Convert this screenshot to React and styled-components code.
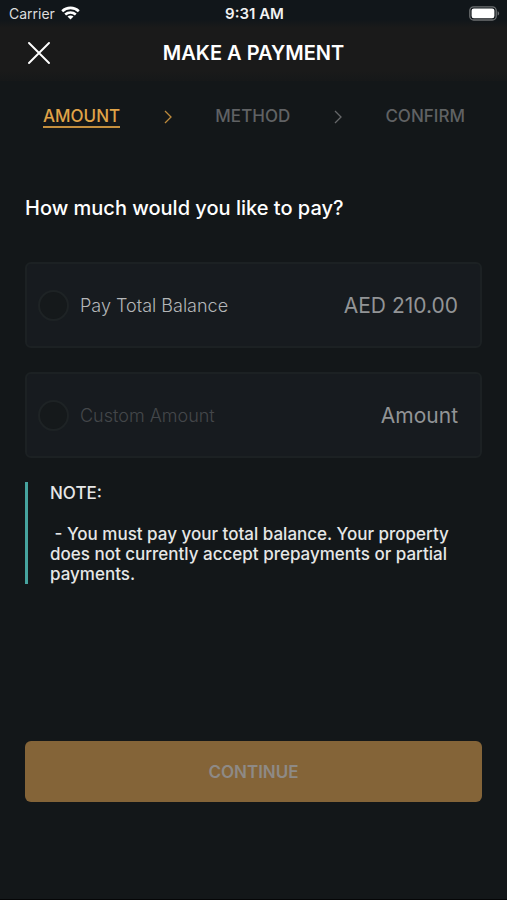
import * as React from "react";
import styled, { createGlobalStyle } from "styled-components";

const steps = ["Amount", "Method", "Confirm"];

function WifiIcon() {
  return (
    <svg width="19" height="14" viewBox="0 0 19 14" aria-hidden="true">
      <g fill="none" stroke="#fff" strokeWidth="2.6">
        <path d="M1.2 5.2C5.8 0.8 13.2 0.8 17.8 5.2" />
        <path d="M4.2 8.6C7.3 5.9 11.7 5.9 14.8 8.6" />
      </g>
      <path d="M6.5 10.6C8.3 9.2 10.7 9.2 12.5 10.6L9.5 13.6Z" fill="#fff" />
    </svg>
  );
}

function BatteryIcon() {
  return (
    <svg width="31" height="15" viewBox="0 0 31 15" aria-hidden="true">
      <rect x="0.8" y="0.8" width="26.4" height="13.2" rx="3.8" fill="none" stroke="#6d7072" strokeWidth="1.3" />
      <rect x="2.6" y="2.6" width="22.8" height="9.6" rx="2.2" fill="#fff" />
      <path d="M28.6 5.2C30.6 5.9 30.6 8.9 28.6 9.6Z" fill="#6d7072" />
    </svg>
  );
}

function CloseIcon() {
  return (
    <svg width="22" height="22" viewBox="0 0 22 22" aria-hidden="true">
      <path d="M1 1L21 21M21 1L1 21" stroke="#fff" strokeWidth="1.9" strokeLinecap="round" />
    </svg>
  );
}

function Chevron({ active }) {
  return (
    <svg width="8" height="14" viewBox="0 0 8 14" aria-hidden="true">
      <path
        d="M1 1L7 7L1 13"
        fill="none"
        stroke={active ? "#bd8a3c" : "#66686a"}
        strokeWidth="1.3"
      />
    </svg>
  );
}

function App() {
  return (
    <Screen>
      <GlobalStyle />
      <StatusBar>
        <Carrier>
          Carrier
          <WifiIcon />
        </Carrier>
        <Clock>9:31 AM</Clock>
        <Battery>
          <BatteryIcon />
        </Battery>
      </StatusBar>
      <Header>
        <CloseButton type="button" aria-label="Close">
          <CloseIcon />
        </CloseButton>
        <Title>MAKE A PAYMENT</Title>
      </Header>
      <Steps>
        {steps.map((step, index) => (
          <React.Fragment key={step}>
            {index > 0 && <Chevron active={index === 1} />}
            <Step $active={index === 0}>{step.toUpperCase()}</Step>
          </React.Fragment>
        ))}
      </Steps>
      <Form onSubmit={(e) => e.preventDefault()}>
        <Question>How much would you like to pay?</Question>
        <Options>
          <Option>
            <Radio type="radio" name="payment" id="total" />
            <OptionLabel htmlFor="total">Pay Total Balance</OptionLabel>
            <Total>AED 210.00</Total>
          </Option>
          <Option>
            <Radio type="radio" name="payment" id="custom" disabled />
            <OptionLabel htmlFor="custom" $disabled>
              Custom Amount
            </OptionLabel>
            <AmountInput
              type="text"
              placeholder="Amount"
              aria-label="Custom amount"
              disabled
            />
          </Option>
        </Options>
        <Note>
          <NoteTitle>NOTE:</NoteTitle>
          <NoteText>
            {" - You must pay your total balance. Your property does not currently accept prepayments or partial payments."}
          </NoteText>
        </Note>
        <ContinueButton type="submit" disabled>
          CONTINUE
        </ContinueButton>
      </Form>
    </Screen>
  );
}

const GlobalStyle = createGlobalStyle`
  * {
    box-sizing: border-box;
  }
  body {
    margin: 0;
    background: #131719;
    color: #fff;
    font-family: Inter, "Liberation Sans", sans-serif;
  }
  button, input {
    font-family: inherit;
  }
`;

const Screen = styled.div`
  display: flex;
  flex-direction: column;
  min-height: 100vh;
  border-bottom: 1px solid #050607;
`;

const StatusBar = styled.div`
  display: grid;
  grid-template-columns: 1fr auto 1fr;
  align-items: center;
  height: 28px;
  padding: 0 7px 2px 9px;
  background: linear-gradient(#11161a 70%, #1a1a1a);
  font-size: 14px;
`;

const Carrier = styled.div`
  display: flex;
  align-items: center;
  gap: 6px;
  color: #dcdddd;
`;

const Clock = styled.div`
  font-size: 15px;
  font-weight: 600;
  color: #f2f2f2;
`;

const Battery = styled.div`
  display: flex;
  justify-content: flex-end;
`;

const Header = styled.header`
  display: grid;
  grid-template-columns: 1fr auto 1fr;
  align-items: center;
  height: 53px;
  padding: 0 28px 4px;
  background: linear-gradient(#1a1a1a 80%, #161819);
`;

const CloseButton = styled.button`
  display: flex;
  justify-self: start;
  padding: 0;
  border: none;
  background: none;
  cursor: pointer;
`;

const Title = styled.h1`
  margin: 0;
  font-size: 20px;
  font-weight: 600;
  line-height: 24px;
`;

const Steps = styled.nav`
  display: flex;
  align-items: center;
  justify-content: space-between;
  padding: 25px 42px 0 43px;
`;

const Step = styled.span`
  border-bottom: 2px solid ${(props) => (props.$active ? "#c48f3e" : "transparent")};
  color: ${(props) => (props.$active ? "#e0a448" : "#606264")};
  font-size: 17px;
  font-weight: 500;
  line-height: 20px;
`;

const Form = styled.form`
  display: flex;
  flex: 1;
  flex-direction: column;
  padding: 67px 25px 97px;
`;

const Question = styled.h2`
  margin: 0;
  font-size: 20px;
  font-weight: 500;
  line-height: 26px;
`;

const Options = styled.div`
  display: flex;
  flex-direction: column;
  gap: 24px;
  margin: 41px 0 24px;
`;

const Option = styled.div`
  display: flex;
  align-items: center;
  height: 86px;
  padding: 0 22px 0 11px;
  border: 2px solid #1c2123;
  border-radius: 6px;
  background: #171b1f;
`;

const Radio = styled.input`
  appearance: none;
  flex: none;
  width: 31px;
  height: 31px;
  margin: 0 11px 0 0;
  border: 2px solid #1e2325;
  border-radius: 50%;
  background: #15191b;
`;

const OptionLabel = styled.label`
  flex: 1;
  color: ${(props) => (props.$disabled ? "#44474a" : "#b4b6b8")};
  font-size: 18px;
  font-weight: 300;
  white-space: nowrap;
`;

const Total = styled.span`
  color: #929496;
  font-size: 21px;
`;

const AmountInput = styled.input`
  width: 120px;
  padding: 0;
  border: none;
  background: none;
  font-size: 21px;
  text-align: right;

  &::placeholder {
    color: #929496;
    opacity: 1;
  }
`;

const Note = styled.section`
  padding: 1px 0 0 22px;
  border-left: 3px solid #46a39e;
  color: #e6e7e7;
  font-size: 17px;
  font-weight: 500;
  line-height: 20px;
`;

const NoteTitle = styled.p`
  margin: 0 0 21px;
`;

const NoteText = styled.p`
  margin: 0;
  white-space: pre-wrap;
`;

const ContinueButton = styled.button`
  height: 61px;
  margin-top: auto;
  border: none;
  border-radius: 6px;
  background: #846438;
  color: #8e8a86;
  font-size: 17px;
  font-weight: 600;
`;

export default App;
